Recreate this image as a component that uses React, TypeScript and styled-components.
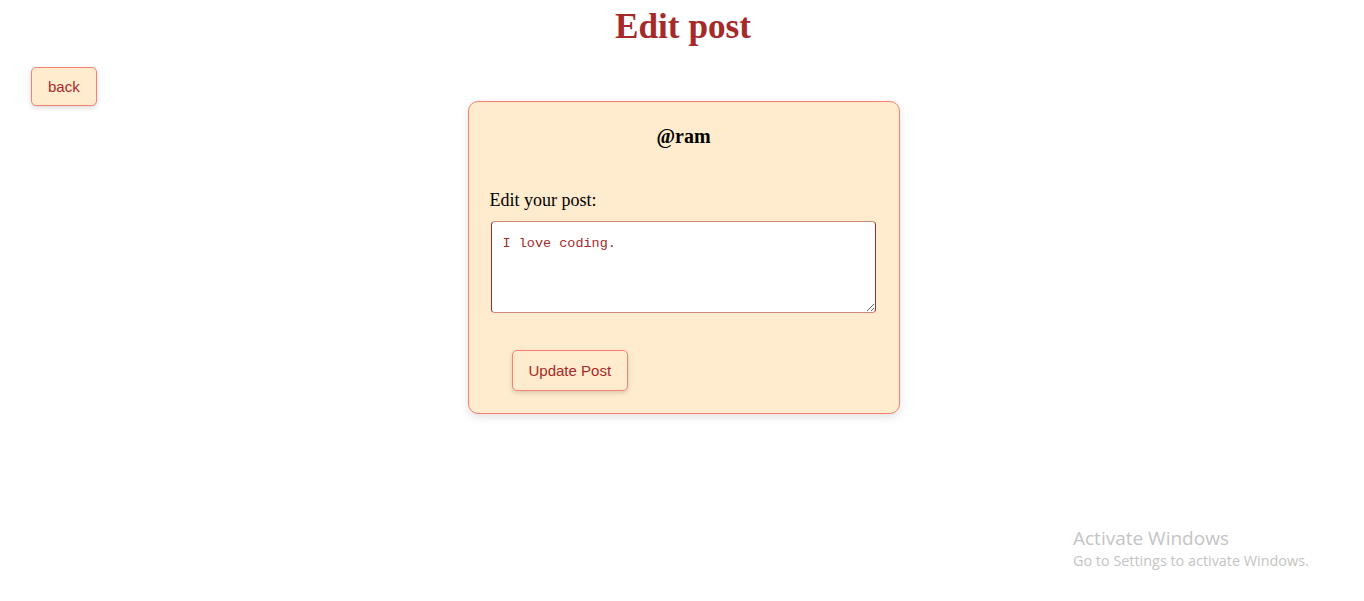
import React from "react";
import styled, { createGlobalStyle } from "styled-components";

const GlobalStyle = createGlobalStyle`
  html, body { margin: 0; padding: 0; background: #ffffff; }
  body { font-family: "Liberation Serif", "Times New Roman", serif; }
`;

const Page = styled.div`
  min-height: 601px;
  position: relative;
`;

const Title = styled.h1`
  margin: 0;
  padding-top: 7px;
  padding-left: 2px;
  text-align: center;
  font-family: "Liberation Serif", "Times New Roman", serif;
  font-size: 35.2px;
  font-weight: 700;
  line-height: normal;
  color: #a52a2a;
`;

const Layout = styled.div`
  display: grid;
  grid-template-columns: 1fr auto 1fr;
  align-items: start;
  padding-top: 20px;
  padding-left: 3px;
`;

const Button = styled.button<{ $pad?: number }>`
  justify-self: start;
  font-family: "Liberation Sans", Arial, sans-serif;
  font-size: 15px;
  line-height: 17px;
  color: #a52a2a;
  background: #ffebcd;
  border: 1px solid #fa8072;
  border-radius: 5px;
  padding: ${(p) => p.$pad ?? 10}px 16px;
  box-shadow: 0 2px 5px rgba(0, 0, 0, 0.15);
  cursor: pointer;
`;

const BackButton = styled(Button)`
  margin-left: 28px;
`;

const Card = styled.div`
  width: 432px;
  box-sizing: border-box;
  margin-top: 34px;
  background: #ffebcd;
  border: 1px solid #fa8072;
  border-radius: 10px;
  box-shadow: 0 3px 8px rgba(0, 0, 0, 0.12);
  padding: 23px 21px 22px;
  display: flex;
  flex-direction: column;
`;

const Handle = styled.h3`
  margin: 0;
  text-align: center;
  font-size: 20px;
  font-weight: 700;
  line-height: 23px;
  color: #000;
`;

const Label = styled.label`
  margin-top: 42px;
  font-size: 18px;
  line-height: 21px;
  color: #000;
`;

const TextArea = styled.textarea`
  margin-top: 10px;
  margin-left: 1px;
  width: 385px;
  height: 92px;
  box-sizing: border-box;
  padding: 14px 11px;
  font-family: "Liberation Mono", "DejaVu Sans Mono", monospace;
  font-size: 13.5px;
  line-height: 15px;
  color: #a52a2a;
  background: #ffffff;
  border: 1px solid #a52a2a;
  border-top-color: #d4877a;
  border-bottom-color: #d4877a;
  border-radius: 4px;
  resize: both;
`;

const UpdateRow = styled.div`
  margin-top: 37px;
  padding-left: 22px;
  display: flex;
`;

const Watermark = styled.div`
  position: absolute;
  left: 1073px;
  top: 525px;
  font-family: "Open Sans", "Noto Sans", sans-serif;
  color: #c4c4c4;
  pointer-events: none;
`;

const WmTitle = styled.div`
  font-size: 19px;
  line-height: 26px;
`;

const WmSub = styled.div`
  font-size: 14.4px;
  line-height: 20px;
`;

export default function App() {
  return (
    <Page>
      <GlobalStyle />
      <Title>Edit post</Title>
      <Layout>
        <BackButton>back</BackButton>
        <Card>
          <Handle>@ram</Handle>
          <Label htmlFor="post">Edit your post:</Label>
          <TextArea id="post" defaultValue="I love coding." />
          <UpdateRow>
            <Button $pad={11}>Update Post</Button>
          </UpdateRow>
        </Card>
        <div />
      </Layout>
      <Watermark>
        <WmTitle>Activate Windows</WmTitle>
        <WmSub>Go to Settings to activate Windows.</WmSub>
      </Watermark>
    </Page>
  );
}
